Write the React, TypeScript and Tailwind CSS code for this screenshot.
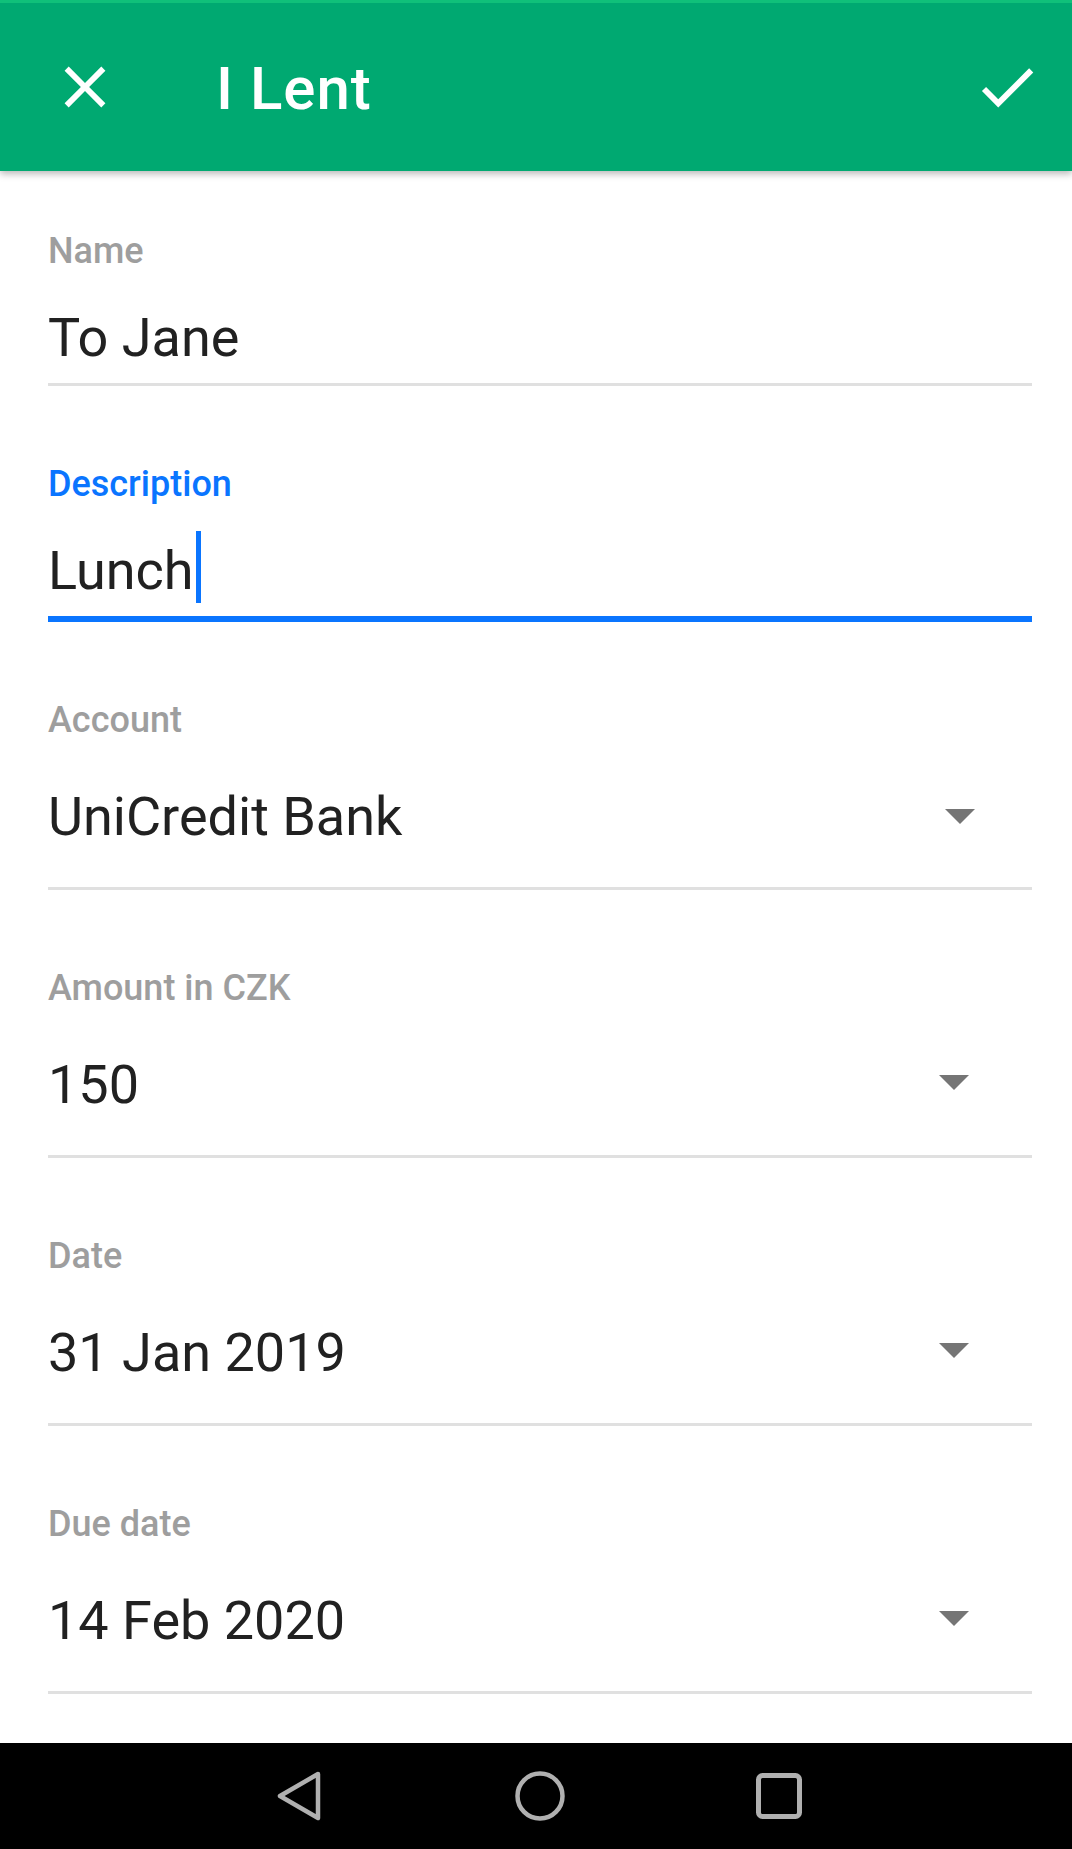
import React from 'react';

const CloseIcon = () => (
  <svg width="70" height="70" viewBox="0 0 24 24" fill="#ffffff">
    <path d="M19 6.41L17.59 5 12 10.59 6.41 5 5 6.41 10.59 12 5 17.59 6.41 19 12 13.41 17.59 19 19 17.59 13.41 12z" />
  </svg>
);

const CheckIcon = () => (
  <svg width="70" height="70" viewBox="0 0 24 24" fill="#ffffff">
    <path d="M9 16.17L4.83 12l-1.42 1.41L9 19 21 7l-1.41-1.41z" />
  </svg>
);

const Caret = () => (
  <svg width="30" height="15" viewBox="0 0 30 15">
    <polygon points="0,0 30,0 15,15" fill="#757575" />
  </svg>
);

const TextField = ({ label, value, focused = false, first = false }: { label: string; value: string; focused?: boolean; first?: boolean }) => (
  <div className={first ? '' : 'mt-[78px]'}>
    <p className={`text-[36px] leading-[41px] font-medium ${focused ? 'text-[#0a75ff]' : 'text-[#9e9e9e]'}`}>{label}</p>
    <div className="mt-[34px] flex items-start h-[63px]">
      <span className="text-[54px] leading-[63px] text-[#212121]">{value}</span>
      {focused && <span className="ml-[2px] -mt-[8px] w-[5px] h-[72px] bg-[#0a75ff]" />}
    </div>
    <div className={`mt-[14px] ${focused ? 'h-[6px] bg-[#0a75ff]' : 'h-[3px] bg-[#e0e0e0]'}`} />
  </div>
);

const SpinnerField = ({ label, value, wide = false }: { label: string; value: string; wide?: boolean }) => (
  <div className="mt-[78px]">
    <p className="text-[36px] leading-[41px] font-medium text-[#9e9e9e]">{label}</p>
    <div className="mt-[44px] flex items-center justify-between h-[63px]">
      <span className="text-[54px] leading-[63px] text-[#212121]">{value}</span>
      <div className={wide ? 'mr-[57px]' : 'mr-[63px] mb-[5px]'}>
        <Caret />
      </div>
    </div>
    <div className="mt-[39px] h-[3px] bg-[#e0e0e0]" />
  </div>
);

export default function App() {
  return (
    <div className="w-[1072px] h-[1849px] flex flex-col bg-white font-['Roboto',sans-serif] overflow-hidden">
      <header className="relative z-10 h-[171px] shrink-0 bg-[#00a971] border-t-[3px] border-[#10c07a] flex items-center shadow-[0_3px_7px_rgba(0,0,0,0.28)]">
        <div className="ml-[50px]">
          <CloseIcon />
        </div>
        <h1 className="ml-[96px] mt-[4px] text-[60px] leading-none font-medium tracking-[1px] text-white">I Lent</h1>
        <div className="ml-auto mr-[30px]">
          <CheckIcon />
        </div>
      </header>

      <main className="flex-1 pl-[48px] pr-[40px] pt-[60px]">
        <TextField label="Name" value="To Jane" first />
        <TextField label="Description" value="Lunch" focused />
        <SpinnerField label="Account" value="UniCredit Bank" wide />
        <SpinnerField label="Amount in CZK" value="150" />
        <SpinnerField label="Date" value="31 Jan 2019" />
        <SpinnerField label="Due date" value="14 Feb 2020" />
      </main>

      <nav className="h-[106px] shrink-0 bg-black flex items-center pl-[276px] gap-[191px]">
        <svg width="48" height="52" viewBox="0 0 48 52" fill="none">
          <path d="M42 4 L4 26 L42 48 Z" stroke="#b0b0b0" strokeWidth="4.5" strokeLinejoin="round" />
        </svg>
        <svg width="50" height="50" viewBox="0 0 50 50" fill="none">
          <circle cx="25" cy="25" r="22.5" stroke="#b0b0b0" strokeWidth="4.5" />
        </svg>
        <svg width="46" height="46" viewBox="0 0 46 46" fill="none">
          <rect x="2.5" y="2.5" width="41" height="41" rx="4" stroke="#b0b0b0" strokeWidth="5" />
        </svg>
      </nav>
    </div>
  );
}
